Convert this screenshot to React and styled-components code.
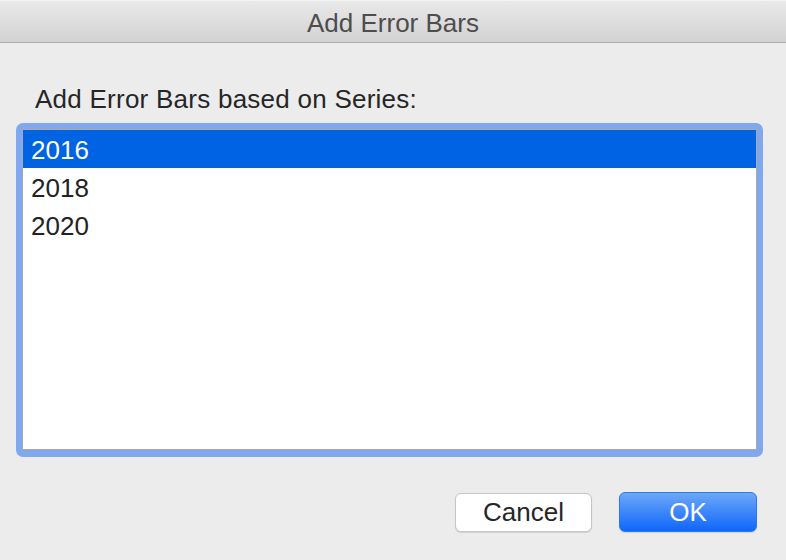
import React, { useState } from 'react';
import styled, { createGlobalStyle } from 'styled-components';

const GlobalStyle = createGlobalStyle`
    html, body {
        margin: 0;
        padding: 0;
        background: #ececec;
    }
    body {
        font-family: "Liberation Sans", Arial, sans-serif;
        -webkit-font-smoothing: antialiased;
    }
`;

const Window = styled.div`
    width: 786px;
    height: 560px;
    display: flex;
    flex-direction: column;
    background: #ececec;
    overflow: hidden;
`;

const TitleBar = styled.div`
    height: 43px;
    flex: 0 0 auto;
    box-sizing: border-box;
    padding-top: 2px;
    line-height: 40px;
    text-align: center;
    font-size: 26px;
    color: #4d4d4d;
    background: linear-gradient(to bottom, #e9e9e9 0%, #d2d2d2 100%);
    border-top: 1px solid #f4f4f4;
    border-bottom: 1px solid #ababab;
`;

const Body = styled.div`
    flex: 1;
    display: flex;
    flex-direction: column;
    padding: 41px 23px 0 16px;
`;

const Label = styled.div`
    font-size: 26px;
    line-height: 30px;
    color: #262626;
    letter-spacing: 0.25px;
    padding-left: 19px;
`;

const FocusRing = styled.div`
    margin-top: 9px;
    height: 334px;
    box-sizing: border-box;
    padding: 6px 6px 7px 6px;
    background: #7fa8ef;
    border-radius: 7px;
`;

const ListBox = styled.div`
    height: 100%;
    box-sizing: border-box;
    background: #fff;
    border: 1px solid #a9a9a9;
    display: flex;
    flex-direction: column;
`;

const ListRow = styled.div`
    height: 38px;
    box-sizing: border-box;
    padding: 2px 0 0 8px;
    line-height: 36px;
    font-size: 26px;
    color: ${({ selected }) => (selected ? '#fff' : '#222')};
    background: ${({ selected }) => (selected ? '#0063e1' : 'transparent')};
    cursor: default;
`;

const Footer = styled.div`
    display: flex;
    justify-content: flex-end;
    align-items: center;
    gap: 27px;
    margin-top: 35px;
    padding-right: 6px;
`;

const Button = styled.button`
    height: 39px;
    box-sizing: border-box;
    font-family: "Liberation Sans", Arial, sans-serif;
    font-size: 26px;
    line-height: 36px;
    padding: 0;
    border-radius: 6px;
    cursor: default;
`;

const CancelButton = styled(Button)`
    width: 137px;
    color: #262626;
    background: #fff;
    border: 1px solid #c6c6c6;
    box-shadow: 0 1px 1px rgba(0, 0, 0, 0.12);
`;

const OkButton = styled(Button)`
    width: 138px;
    height: 40px;
    color: #fff;
    border: 1px solid #2a78f4;
    background: linear-gradient(to bottom, #6ca8f8 0%, #0f66fb 100%);
    box-shadow: 0 1px 1px rgba(0, 0, 0, 0.1);
`;

const series = ['2016', '2018', '2020'];

const App = () => {
    const [selected, setSelected] = useState(0);

    return (
        <Window>
            <GlobalStyle />
            <TitleBar>Add Error Bars</TitleBar>
            <Body>
                <Label>Add Error Bars based on Series:</Label>
                <FocusRing>
                    <ListBox>
                        {series.map((s, i) => (
                            <ListRow key={s} selected={i === selected} onClick={() => setSelected(i)}>
                                {s}
                            </ListRow>
                        ))}
                    </ListBox>
                </FocusRing>
                <Footer>
                    <CancelButton>Cancel</CancelButton>
                    <OkButton>OK</OkButton>
                </Footer>
            </Body>
        </Window>
    );
};

export default App;
